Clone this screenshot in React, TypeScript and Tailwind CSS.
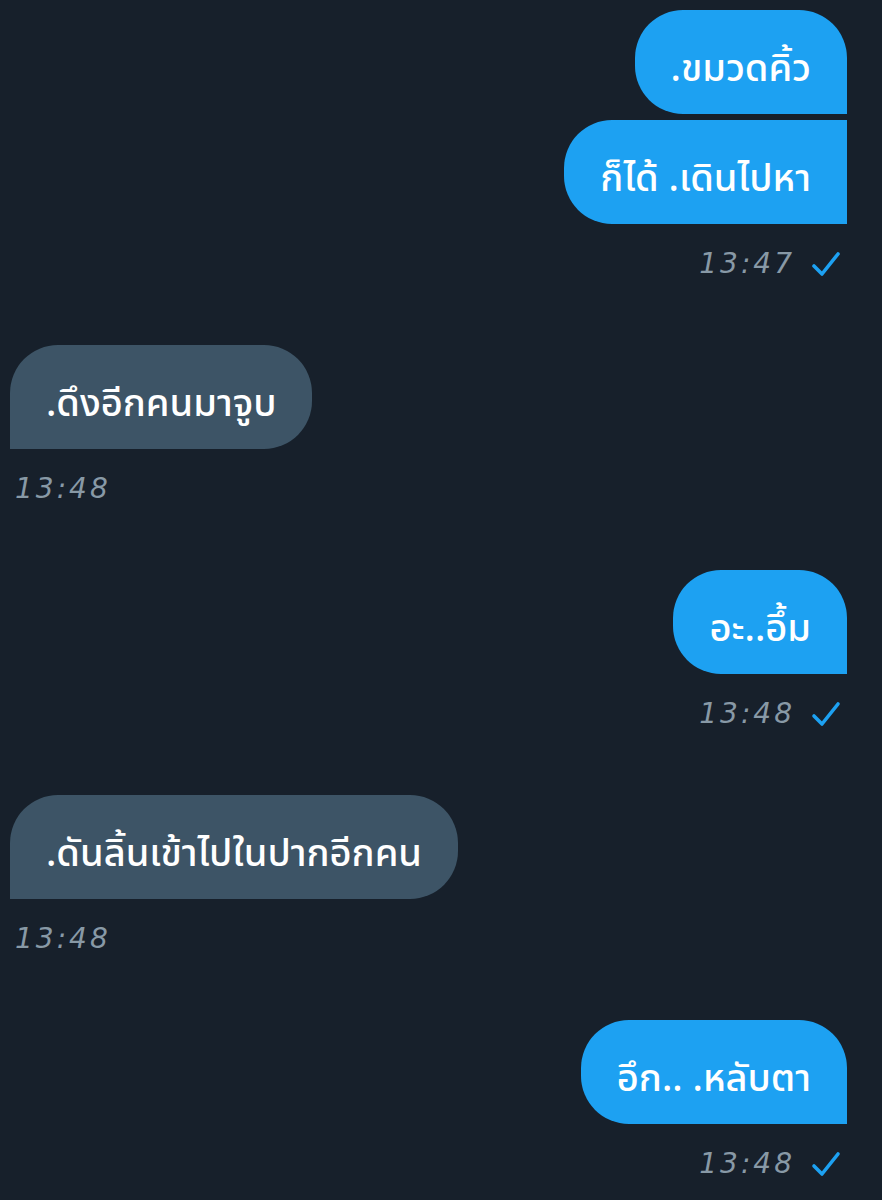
type Msg = {
  side: "me" | "them";
  lines: string[];
  time: string;
};

const messages: Msg[] = [
  { side: "me", lines: [".ขมวดคิ้ว", "ก็ได้ .เดินไปหา"], time: "13:47" },
  { side: "them", lines: [".ดึงอีกคนมาจูบ"], time: "13:48" },
  { side: "me", lines: ["อะ..อึ้ม"], time: "13:48" },
  { side: "them", lines: [".ดันลิ้นเข้าไปในปากอีกคน"], time: "13:48" },
  { side: "me", lines: ["อึก.. .หลับตา"], time: "13:48" },
];

function Check() {
  return (
    <svg width="30" height="26" viewBox="0 0 30 26" fill="none">
      <path d="M3 15 L11 23 L27 3" stroke="#1da1f2" strokeWidth="3.6" strokeLinecap="round" strokeLinejoin="round" />
    </svg>
  );
}

function Bubble({ text, side, first }: { text: string; side: "me" | "them"; first: boolean }) {
  if (side === "me") {
    return (
      <div
        className={
          "flex h-[104px] items-center bg-[#1da1f2] px-[36px] pt-[14px] text-white text-[38px] font-medium " +
          (first ? "rounded-l-[48px] rounded-tr-[48px]" : "rounded-l-[48px]")
        }
      >
        {text}
      </div>
    );
  }
  return (
    <div className="flex h-[104px] items-center bg-[#3d5466] px-[36px] pt-[14px] text-white text-[38px] font-medium rounded-r-[48px] rounded-tl-[48px]">
      {text}
    </div>
  );
}

export default function App() {
  return (
    <div className="min-h-screen w-full bg-[#17202b] pt-[10px] pl-[10px] pr-[35px] font-['Noto_Sans_Thai','Noto_Sans','DejaVu_Sans',sans-serif]">
      {messages.map((m, i) => (
        <div key={i} className={"flex flex-col mb-[61px] " + (m.side === "me" ? "items-end" : "items-start")}>
          <div className={"flex flex-col gap-[6px] " + (m.side === "me" ? "items-end" : "items-start")}>
            {m.lines.map((l, j) => (
              <Bubble key={j} text={l} side={m.side} first={j === 0} />
            ))}
          </div>
          <div
            className={
              "mt-[20px] flex h-10 items-center gap-[16px] " + (m.side === "me" ? "pr-[6px]" : "pl-[5px]")
            }
          >
            <span className="text-[28px] italic tracking-[3px] text-[#8899a6] font-['DejaVu_Sans',sans-serif] font-light">
              {m.time}
            </span>
            {m.side === "me" && <Check />}
          </div>
        </div>
      ))}
    </div>
  );
}
